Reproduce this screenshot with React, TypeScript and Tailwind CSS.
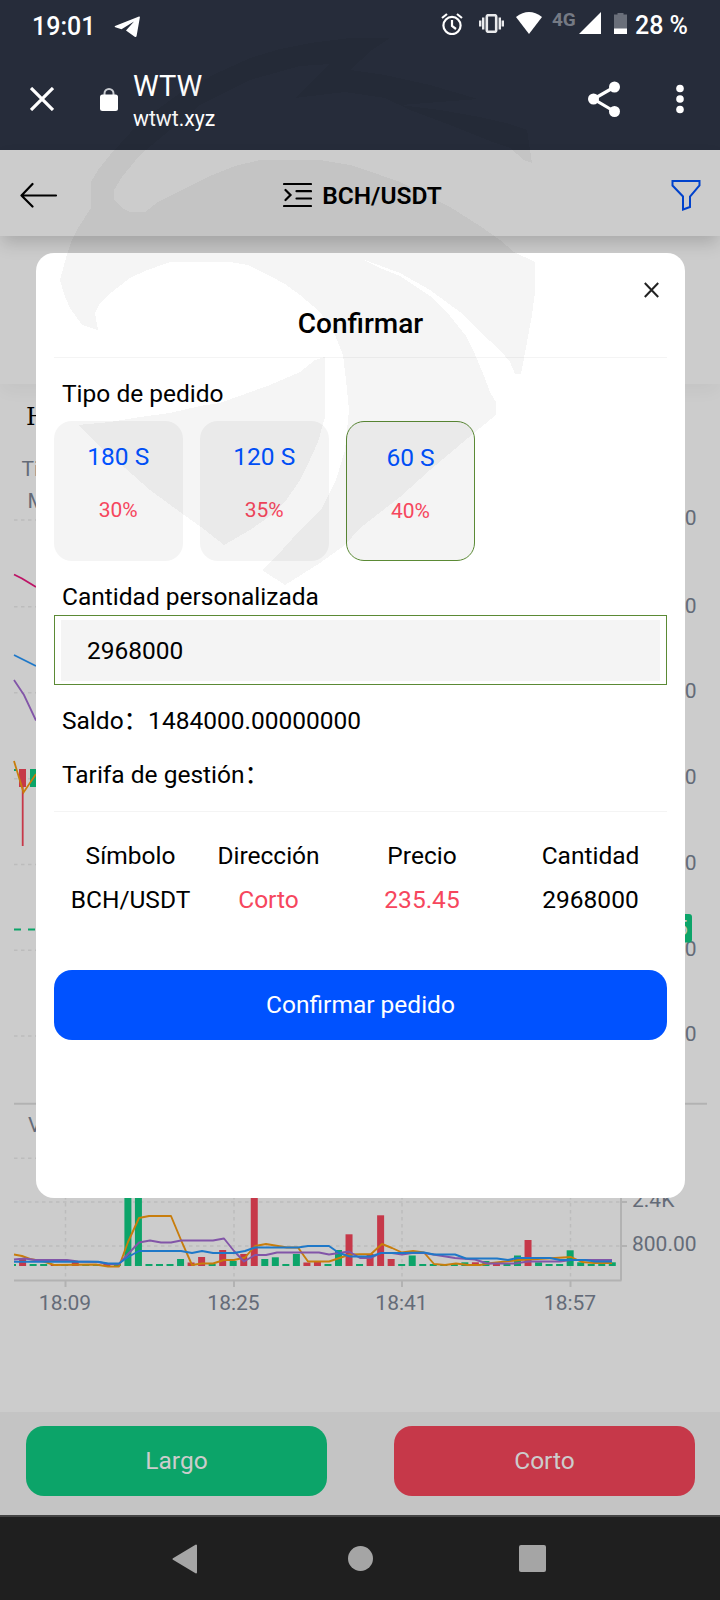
const GREEN = "#0ca469";
const RED = "#c63849";

// [color, top] of each volume bar, the base is at y=1266
const bars: [string, number][] = [
  ["r", 1258.3], ["g", 1264], ["g", 1264], ["r", 1264], ["g", 1264], ["r", 1262], ["g", 1264], ["g", 1264],
  ["r", 1264], ["g", 1264], ["g", 1190], ["g", 1190], ["g", 1264], ["g", 1264], ["g", 1264], ["g", 1259],
  ["r", 1262.5], ["r", 1257], ["g", 1264], ["r", 1250], ["g", 1261], ["r", 1254], ["r", 1190], ["g", 1259],
  ["g", 1257.3], ["g", 1264], ["g", 1254], ["r", 1262.5], ["r", 1261], ["g", 1264], ["g", 1250], ["r", 1234.3],
  ["g", 1264], ["r", 1254], ["r", 1215.3], ["r", 1259], ["g", 1264], ["g", 1255.5], ["g", 1264], ["g", 1264],
  ["g", 1264], ["g", 1264], ["g", 1262.3], ["r", 1262.3], ["g", 1261], ["r", 1264], ["g", 1264], ["g", 1255.5],
  ["r", 1240], ["g", 1262.3], ["g", 1264], ["g", 1264], ["g", 1250.3], ["g", 1262.3], ["g", 1264], ["g", 1264],
  ["g", 1262.3],
];

const rows = [520, 606.8, 692.8, 778.8, 864.5, 950.3, 1036, 1158.3, 1202, 1246];
const cols = [
  { x: 65.5, label: "18:09" },
  { x: 234, label: "18:25" },
  { x: 402, label: "18:41" },
  { x: 570.5, label: "18:57" },
];
const prices = [
  { y: 525, label: "240.00" },
  { y: 612.5, label: "239.00" },
  { y: 698, label: "238.00" },
  { y: 783.5, label: "237.00" },
  { y: 870, label: "236.00" },
  { y: 955.5, label: "235.00" },
  { y: 1041, label: "234.00" },
];

const types = [
  { time: "180 S", rate: "30%", active: false },
  { time: "120 S", rate: "35%", active: false },
  { time: "60 S", rate: "40%", active: true },
];

function StatusBar() {
  return (
    <div className="flex h-[50px] items-center pl-[32px] pr-[32px] text-[25px] font-medium text-white">
      <span className="mt-[3px]">19:01</span>
      <svg className="ml-[19px] mt-[3px] h-[22px] w-[26px]" viewBox="0 0 26 22" fill="#fff">
        <path d="M1 10 25 .5q1-.3 .9 .8L22.600 20q-.4 1.700-1.900 .8L12 14.500 20 5.500 7.500 13.200 1.300 11.200Q0 10.600 1 10Z" />
      </svg>
      <div className="ml-auto flex items-start">
        <svg className="mt-[3px] h-[22px] w-[22px]" viewBox="0 0 22 22" fill="none" stroke="#fff" strokeWidth="2.200">
          <circle cx="11" cy="12.500" r="8.600" />
          <path d="M11 7v6l4 3M1 5 6 1M21 5 16 1" />
        </svg>
        <svg className="ml-[16px] mt-[4px] h-[19px] w-[25px]" viewBox="0 0 25 19" fill="none" stroke="#e9eaec">
          <rect x="7.800" y="1.200" width="9.400" height="16.600" rx="1.500" strokeWidth="2.600" />
          <path d="M4.200 3.500v12M20.800 3.500v12M1.200 6.500v6M23.800 6.500v6" strokeWidth="2.400" />
        </svg>
        <svg className="ml-[12px] mt-[2px] h-[22px] w-[26px]" viewBox="0 0 26 22" fill="#fff">
          <path d="M0 5Q13-5 26 5L13 22Z" />
        </svg>
        <span className="ml-[10px] mt-[2px] w-[26px] text-[19px] font-bold leading-[16px] text-[#757a84]">4G</span>
        <svg className="ml-[1px] mt-[2px] h-[22px] w-[22px]" viewBox="0 0 22 22" fill="#fff">
          <path d="M22 0v22H0Z" />
        </svg>
        <svg className="ml-[13px] mt-[3px] h-[21px] w-[13px]" viewBox="0 0 13 21">
          <path d="M3.500 0h6v1.500H13V16H0V1.500h3.500Z" fill="#6a6f7a" />
          <path d="M0 15.500h13V21H0Z" fill="#fff" />
        </svg>
        <span className="ml-[8px] mt-[2px] leading-[28px]">28 %</span>
      </div>
    </div>
  );
}

function BrowserBar() {
  return (
    <div className="flex h-[100px] items-center pl-[30px] text-white">
      <svg className="mb-[2px] h-[24px] w-[24px]" viewBox="0 0 24 24" stroke="#fff" strokeWidth="3.200">
        <path d="M1 1 23 23M23 1 1 23" />
      </svg>
      <svg className="mb-[2px] ml-[46px] h-[23px] w-[18px]" viewBox="0 0 18 23">
        <path d="M4.500 9V5.500a4.500 4.500 0 0 1 9 0V9" fill="none" stroke="#c9ccd1" strokeWidth="2" />
        <rect y="6.500" width="18" height="16.500" rx="2.500" fill="#fff" />
      </svg>
      <div className="ml-[15px] mt-[2px]">
        <p className="h-[34px] text-[29px] leading-[34px]">WTW</p>
        <p className="h-[30px] text-[21.200px] leading-[31px]">wtwt.xyz</p>
      </div>
      <svg className="mb-[2px] ml-auto h-[36px] w-[32px]" viewBox="0 0 32 36" fill="#fff">
        <path d="M26.500 6 5.500 18l21 12.500" fill="none" stroke="#fff" strokeWidth="3.200" />
        <circle cx="5.500" cy="18" r="5.500" />
        <circle cx="26.500" cy="6" r="5.500" />
        <circle cx="26.500" cy="30.500" r="5.500" />
      </svg>
      <svg className="mb-[2px] ml-[56px] mr-[36px] h-[30px] w-[8px]" viewBox="0 0 8 30" fill="#fff">
        <circle cx="4" cy="4.500" r="3.800" />
        <circle cx="4" cy="15" r="3.800" />
        <circle cx="4" cy="25.500" r="3.800" />
      </svg>
    </div>
  );
}

function PairHeader() {
  return (
    <div className="relative flex h-[86px] items-center justify-between bg-[#ccc] pl-[20px] pr-[19px] shadow-[0_9px_16px_-2px_rgba(0,0,0,0.17)]">
      <svg className="mt-[3px] h-[26px] w-[38px]" viewBox="0 0 38 26" fill="none" stroke="#000" strokeWidth="2.200" strokeLinecap="round" strokeLinejoin="round">
        <path d="M12.500 2 1.500 13.500 12.500 24.500M1.500 13.500H36" />
      </svg>
      <div className="flex items-center pr-[4px]">
        <svg className="mt-[3px] h-[26px] w-[29px]" viewBox="0 0 29 26" fill="none" stroke="#000" strokeWidth="2.200" strokeLinecap="round">
          <path d="M1 2h27M13.500 9.200H28M13.500 16.500H28M1 24h27M2.500 8l5 5-5 5" />
        </svg>
        <h1 className="ml-[10px] mt-[5px] text-[24.500px] font-semibold leading-[30px] text-black">BCH/USDT</h1>
      </div>
      <svg className="mt-[3px] h-[32px] w-[30px]" viewBox="0 0 30 32" fill="none" stroke="#0042cc" strokeWidth="2">
        <path d="M1.500 2h27v4.500L19 17.500V28l-7 2.500v-13L1.500 6.500Z" />
      </svg>
    </div>
  );
}

function Chart() {
  return (
    <svg className="block h-[1028px] w-[720px]" viewBox="0 384 720 1028" fill="none" fontFamily="Roboto, sans-serif" fontSize="21">
      <text x="26" y="425" fontFamily="'DejaVu Serif', serif" fontSize="24" fill="#000">H</text>
      <g fill="#646b78">
        <text x="21.500" y="476">Time</text>
        <text x="27.500" y="508">MA</text>
        <text x="28" y="1132">VOL</text>
      </g>

      <g stroke="#bcbcbc" strokeWidth="1.500" strokeDasharray="3.500 3.500">
        {rows.map((y) => (
          <path key={y} d={`M14 ${y}H621`} />
        ))}
        {cols.map((c) => (
          <path key={c.x} d={`M${c.x} 440V1280`} />
        ))}
      </g>
      <path d="M14 1103.800H707M14 1280.500H621.500M621 440V1280.500M621 1202h6M621 1246h6M65.500 1280v7M234 1280v7M402 1280v7M570.500 1280v7" stroke="#b2b2b2" strokeWidth="2" />

      {/* velas */}
      <rect x="19" y="769" width="7" height="18" fill={RED} />
      <path d="M22.700 787v59" stroke={RED} strokeWidth="1.800" />
      <rect x="30" y="769" width="7" height="18" fill={GREEN} />
      <path d="M14 770h2" stroke={GREEN} strokeWidth="2" />
      <path d="M14 574.500 22 578.500 36 587" stroke="#bd1466" strokeWidth="1.800" />
      <path d="M14 655 36 666" stroke="#1f78c8" strokeWidth="1.800" />
      <path d="M14 680 24 695 36 720.500" stroke="#8255a8" strokeWidth="1.800" />
      <path d="M14 761 23.500 792.500 36 774" stroke="#c87d0c" strokeWidth="1.800" />
      <path d="M14 929.500H621" stroke={GREEN} strokeWidth="2" strokeDasharray="7 7" />

      {/* volumen */}
      <path d="M14 1265h2" stroke={GREEN} strokeWidth="2" />
      {bars.map(([color, top], i) => (
        <rect key={i} x={19.1 + i * 10.53} y={top} width="7" height={1266 - top} fill={color === "g" ? GREEN : RED} />
      ))}
      <g strokeWidth="1.900" strokeLinejoin="round">
        <path
          stroke="#c87d0c"
          d="M14 1254.500 22 1256 30 1259 44 1261.500 54 1265 96 1264.500 108 1266.500H119L128 1242 139 1218 149 1216H171L181 1240 192 1265 202 1263.500H213L224 1260H234L245 1257.500 255 1246 266 1244 287 1247.500H298L308 1261.500H329L350 1254.500 371 1254 382 1244 392 1248 402 1252.500 413 1251 424 1252.500 434 1264 445 1265 456 1263.500 468 1265H480L492 1263 520 1260 555 1258 571 1257 582 1262 594 1263H612"
        />
        <path
          stroke="#8255a8"
          d="M14 1259.500 25 1258.500 35 1260H67L78 1261.500 98 1262 108 1264H119L128 1254 139 1242.500 150 1240.500 161 1242.500H171L181 1240.500H213L224 1238.500 234 1251 244 1261.500 255 1255H266L277 1252.500H319L329 1254.500 349 1251.500 360 1258H371L381 1253H392L402 1254.500 412 1253 424 1253 455 1258 475 1259.500 487 1263.500H515L528 1261.500H560L571 1260H612"
        />
        <path
          stroke="#1f78c8"
          d="M14 1261.700H98L108 1263.500H119L128 1257 139 1251H181L192 1253 202 1251 213 1253H234L245 1251 255 1247.500H298L308 1246H329L339 1253 350 1256.500H371L381 1253H402L424 1252.500 434 1254.500H455L466 1258.500H497L508 1260 517 1258H550L560 1260H585L595 1261.500H612"
        />
      </g>

      <g fill="#646b78">
        {cols.map((c) => (
          <text key={c.label} x={c.x - 0.5} y="1309.500" textAnchor="middle">{c.label}</text>
        ))}
        {prices.map((p) => (
          <text key={p.label} x="632" y={p.y}>{p.label}</text>
        ))}
        <text x="632" y="1206.500">2.4K</text>
        <text x="632" y="1250.500">800.00</text>
      </g>
      <rect x="622" y="914" width="70" height="28.500" rx="3" fill={GREEN} />
      <text x="676" y="935" fill="#ccc">5</text>
    </svg>
  );
}

function TradeButtons() {
  return (
    <div className="flex h-[103px] justify-between bg-[#c4c4c4] pl-[26px] pr-[25px] pt-[14px] text-[24.500px] text-[#ccc]">
      <button className="h-[70px] w-[301px] rounded-[18px] bg-[#0ca469]">Largo</button>
      <button className="h-[70px] w-[301px] rounded-[18px] bg-[#c63849]">Corto</button>
    </div>
  );
}

function NavBar() {
  return (
    <div className="flex h-[85px] items-center justify-between border-t-2 border-[#444] bg-[#1f1f1f] pl-[172px] pr-[174px]">
      <svg className="h-[30px] w-[25px]" viewBox="0 0 25 30" fill="#a5a5a5" stroke="#a5a5a5" strokeWidth="2" strokeLinejoin="round">
        <path d="M24 1.500v27L1.500 15Z" />
      </svg>
      <div className="ml-[4px] h-[25px] w-[25px] rounded-full bg-[#a5a5a5]" />
      <div className="h-[27px] w-[27px] rounded-[2px] bg-[#a5a5a5]" />
    </div>
  );
}

function ConfirmModal() {
  return (
    <div className="absolute left-[36px] top-[253px] h-[945px] w-[649px] rounded-[18px] bg-white px-[18px] text-[24.500px] leading-[30px] text-black">
      <svg className="absolute right-[26px] top-[29px] h-[16px] w-[15px]" viewBox="0 0 15 16" stroke="#222" strokeWidth="2">
        <path d="M.8 1 14.200 15M14.200 1 .8 15" />
      </svg>
      <h2 className="h-[105px] border-b border-[#f4f4f4] pt-[54px] text-center text-[28px] font-medium leading-[34px]">Confirmar</h2>

      <p className="pl-[8px] pt-[21px]">Tipo de pedido</p>
      <div className="mt-[12px] flex gap-[17.500px]">
        {types.map((t) => (
          <div
            key={t.time}
            className={
              t.active
                ? "h-[140px] w-[129px] rounded-[18px] border border-[#5b8a35] bg-[#f4f4f4] pt-[21px] text-center"
                : "h-[140px] w-[128.500px] rounded-[18px] bg-[#f4f4f4] pt-[21px] text-center"
            }
          >
            <p className="text-[#0052ff]">{t.time}</p>
            <p className="mt-[23px] text-[21px] text-[#f6465d]">{t.rate}</p>
          </div>
        ))}
      </div>

      <p className="pl-[8px] pt-[21px]">Cantidad personalizada</p>
      <div className="mt-[3px] h-[70px] border border-[#5b8a35] pb-[3px] pl-[6px] pr-[6px] pt-[4px]">
        <div className="flex h-[61px] items-center bg-[#f4f4f4] pl-[26px]">2968000</div>
      </div>

      <div className="h-[127px] border-b border-[#f4f4f4] pl-[8px] pt-[21px] font-[Roboto,'Noto_Sans_CJK_SC',sans-serif]">
        <p className="h-[30px]">Saldo：1484000.00000000</p>
        <p className="mt-[24px] h-[30px]">Tarifa de gestión：</p>
      </div>

      <div className="grid grid-cols-[153px_123px_184px_153px] gap-y-[14px] pt-[29px] text-center">
        <span>Símbolo</span>
        <span>Dirección</span>
        <span>Precio</span>
        <span>Cantidad</span>
        <span>BCH/USDT</span>
        <span className="text-[#f6465d]">Corto</span>
        <span className="text-[#f6465d]">235.45</span>
        <span>2968000</span>
      </div>

      <button className="mt-[55px] h-[70px] w-full rounded-[18px] bg-[#0052ff] text-white">Confirmar pedido</button>
    </div>
  );
}

// marca de agua
function Watermark() {
  return (
    <svg className="pointer-events-none absolute left-0 top-0 h-[600px] w-[720px]" viewBox="0 0 720 600" fill="#000" fillOpacity="0.038" shapeRendering="crispEdges">
      <path d="M91 208V182L98 170 110 155 140 122 180 93 215 74 250 58 280 49 310 43 350 38 390 38 372 50 350 70 385 75 430 85 478 99 400 105 440 110 480 117 510 124 527 130 532 163 524 160 510 148 495 143 450 125 410 110 385 98 345 92 295 98 330 64 300 66 250 80 200 105 170 130 140 155 122 177 114 190 114 200 122 208 130 212H145L158 202 180 191 210 176 235 166 260 160H320L350 165 380 175 400 182 420 192 450 207 480 226 500 240 514 252 535 262V292L532 315 527 342 521 374H515L510 362 500 350 480 332 460 312 430 290 400 273 362 259 380 268 400 276 430 296 450 316 466 336 474 352 484 376 490 392 496 402V415L474 433 430 470 400 497 360 528 345 545 320 563 285 585 262 570 275 558 300 530 322 508 336 480 345 450 349 410 346 380 343 355 335 335 320 312 300 295 285 284 270 276 248 265 230 262H170L145 271 130 278 112 292 100 303 95 313 98 330 82 325 70 308 64 294 60 280 66 258 72 240 78 228Z" />
      <path d="M325 357V417L318 442 308 464 300 480 285 502 270 516 250 530 224 545 205 530 180 512 150 490 125 468 100 447 78 425 110 422 140 417 170 413 200 406 220 403 245 394 270 385 300 372 315 360Z" />
    </svg>
  );
}

export default function App() {
  return (
    <div className="relative h-[1600px] w-[720px] overflow-hidden bg-[#ccc] font-[Roboto,sans-serif]">
      <div className="bg-[#262c3a]">
        <StatusBar />
        <BrowserBar />
      </div>
      <PairHeader />
      <div className="h-[148px] bg-[#ccc] shadow-[0_9px_16px_-2px_rgba(0,0,0,0.04)]" />
      <Chart />
      <TradeButtons />
      <NavBar />
      <ConfirmModal />
      <Watermark />
    </div>
  );
}
